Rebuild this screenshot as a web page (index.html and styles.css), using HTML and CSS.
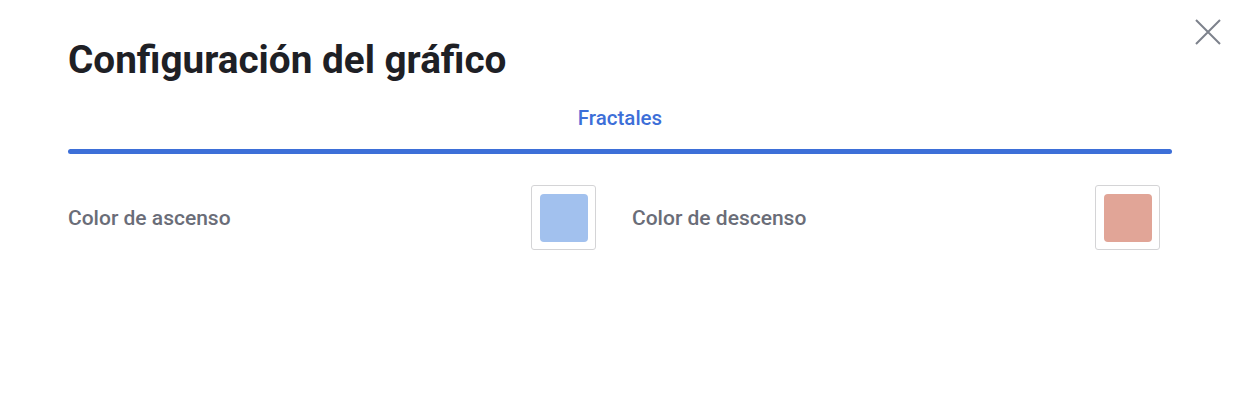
FILE: index.html
```html
<!DOCTYPE html>
<html>
<head>
<meta charset="utf-8">
<link rel="stylesheet" href="styles.css">
</head>
<body>
<div class="dialog">
  <button class="close" aria-label="Cerrar">
    <svg width="26" height="26" viewBox="0 0 26 26"><path d="M1 1L25 25M25 1L1 25" stroke="#7d828c" stroke-width="2" fill="none"/></svg>
  </button>
  <h1 class="title">Configuración del gráfico</h1>
  <div class="tabs">
    <div class="tab active">Fractales</div>
  </div>
  <div class="tab-line"></div>
  <div class="settings">
    <div class="row">
      <span class="label">Color de ascenso</span>
      <span class="swatch"><span class="fill up"></span></span>
    </div>
    <div class="row">
      <span class="label">Color de descenso</span>
      <span class="swatch"><span class="fill down"></span></span>
    </div>
  </div>
</div>
</body>
</html>
```

FILE: styles.css
```css
html, body {
  margin: 0;
  padding: 0;
  background: #ffffff;
  font-family: Roboto, "Liberation Sans", sans-serif;
}
.dialog {
  position: relative;
  width: 1242px;
  height: 418px;
  box-sizing: border-box;
  padding: 34px 70px 0 68px;
}
.close {
  position: absolute;
  top: 19px;
  right: 21px;
  width: 26px;
  height: 26px;
  padding: 0;
  border: 0;
  background: none;
  display: flex;
}
.title {
  margin: 0;
  font-size: 38.7px;
  font-weight: 700;
  line-height: 52px;
  color: #1e2025;
}
.tabs {
  display: flex;
  justify-content: center;
  margin-top: 19px;
}
.tab {
  font-size: 20.5px;
  font-weight: 500;
  color: #3d6fd8;
  line-height: 26px;
}
.tab-line {
  height: 5px;
  border-radius: 3px;
  background: #3d6fd8;
  margin-top: 18px;
}
.settings {
  display: grid;
  grid-template-columns: 1fr 1fr;
  column-gap: 24px;
  margin-top: 31px;
}
.row {
  display: flex;
  align-items: center;
  justify-content: space-between;
  padding-right: 12px;
}
.label {
  font-size: 21px;
  font-weight: 500;
  color: #6a6d78;
}
.swatch {
  width: 65px;
  height: 65px;
  box-sizing: border-box;
  border: 1px solid #d4d4d6;
  border-radius: 3px;
  display: flex;
  align-items: center;
  justify-content: center;
}
.fill {
  width: 48px;
  height: 48px;
  border-radius: 4px;
}
.fill.up { background: #a2c1ee; }
.fill.down { background: #e1a597; }
```
